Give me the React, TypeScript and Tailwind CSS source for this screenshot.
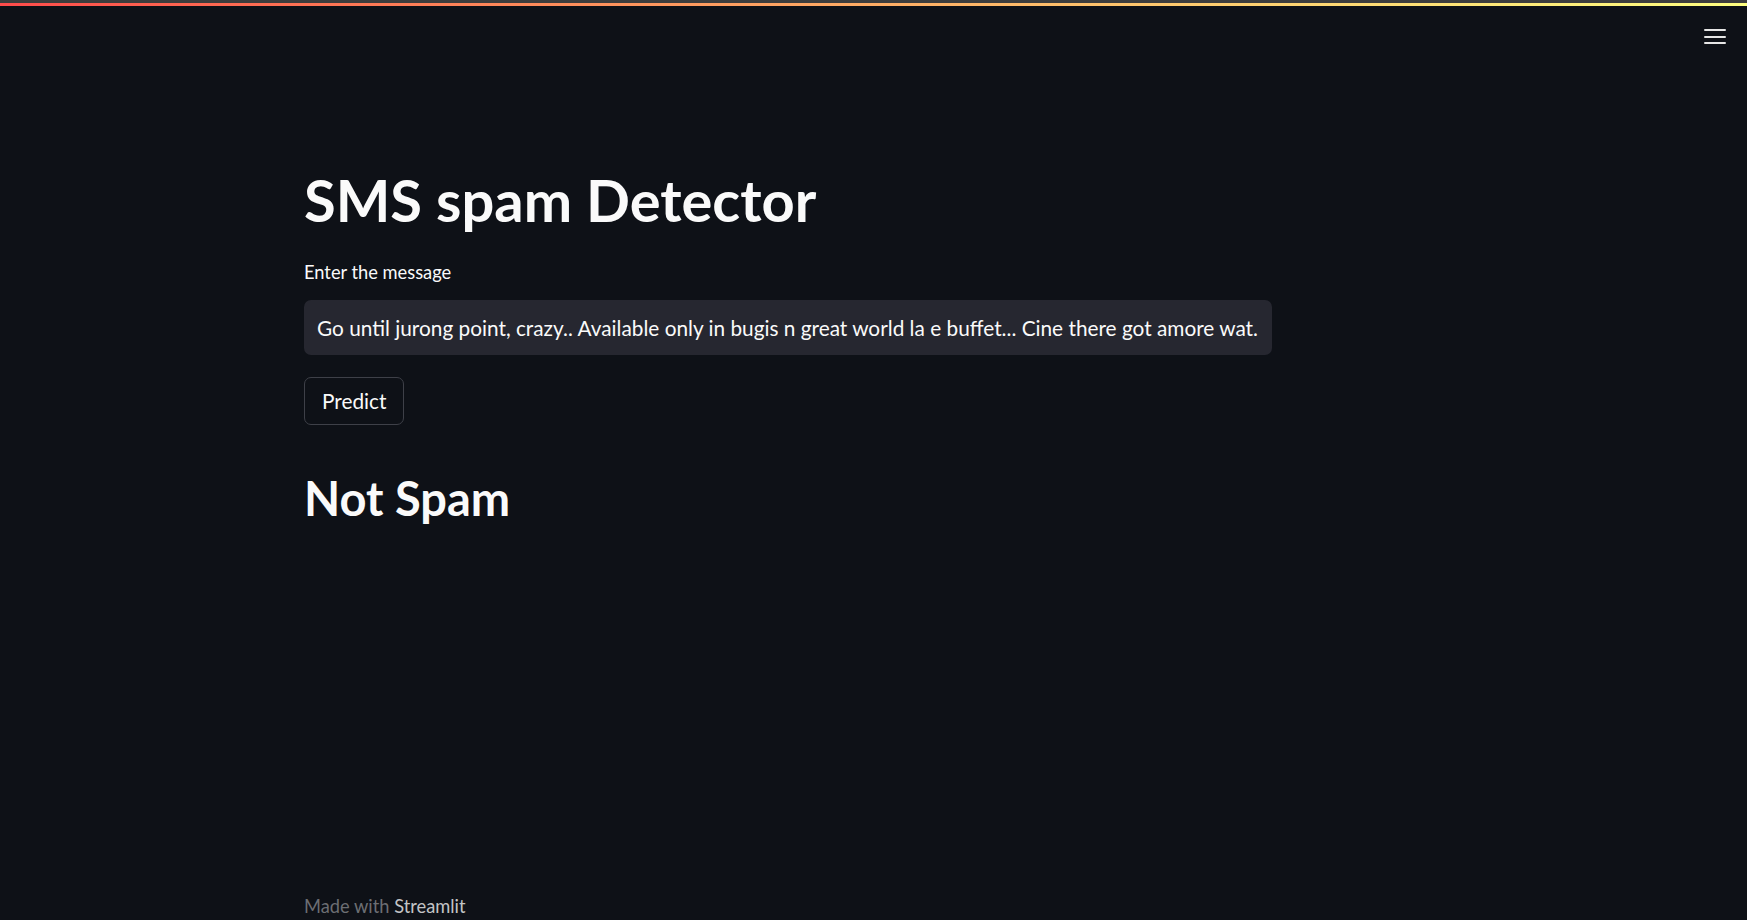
export default function App() {
  return (
    <div className="h-screen overflow-hidden bg-[#0e1117] text-[#fafafa] font-['Lato',sans-serif] flex flex-col">
      <div className="h-[3px] bg-[#3d3d3d]"></div>
      <div className="h-[3px] bg-linear-to-r from-[#ff4b4b] to-[#ffff80]"></div>
      <div className="flex justify-end pr-[21px] pt-[23px]">
        <button className="flex flex-col gap-[4.5px] w-[22px]">
          <span className="h-[2px] bg-[#e6e6e6] rounded"></span>
          <span className="h-[2px] bg-[#e6e6e6] rounded"></span>
          <span className="h-[2px] bg-[#e6e6e6] rounded"></span>
        </button>
      </div>
      <div className="pl-[304px] w-[1272px] flex flex-col">
        <h1 className="mt-[120px] text-[57.8px] leading-[72px] font-bold">SMS spam Detector</h1>
        <label className="mt-[24px] text-[18.3px] leading-[24px]">Enter the message</label>
        <div className="mt-[16px] h-[55px] rounded-[7px] bg-[#262730] flex items-center px-[13px] text-[20.8px] whitespace-nowrap">
          Go until jurong point, crazy.. Available only in bugis n great world la e buffet... Cine there got amore wat.
        </div>
        <button className="mt-[22px] self-start h-[48px] px-[17px] rounded-[7px] border border-[#3e4048] text-[20.8px]">Predict</button>
        <h2 className="mt-[45px] text-[47px] leading-[56px] font-bold">Not Spam</h2>
      </div>
      <div className="mt-auto pl-[304px] pb-[2px] text-[18.3px] leading-[24px]">
        <span className="text-[#6c6e73]">Made with </span>
        <span className="text-[#c3c4c6]">Streamlit</span>
      </div>
    </div>
  );
}
